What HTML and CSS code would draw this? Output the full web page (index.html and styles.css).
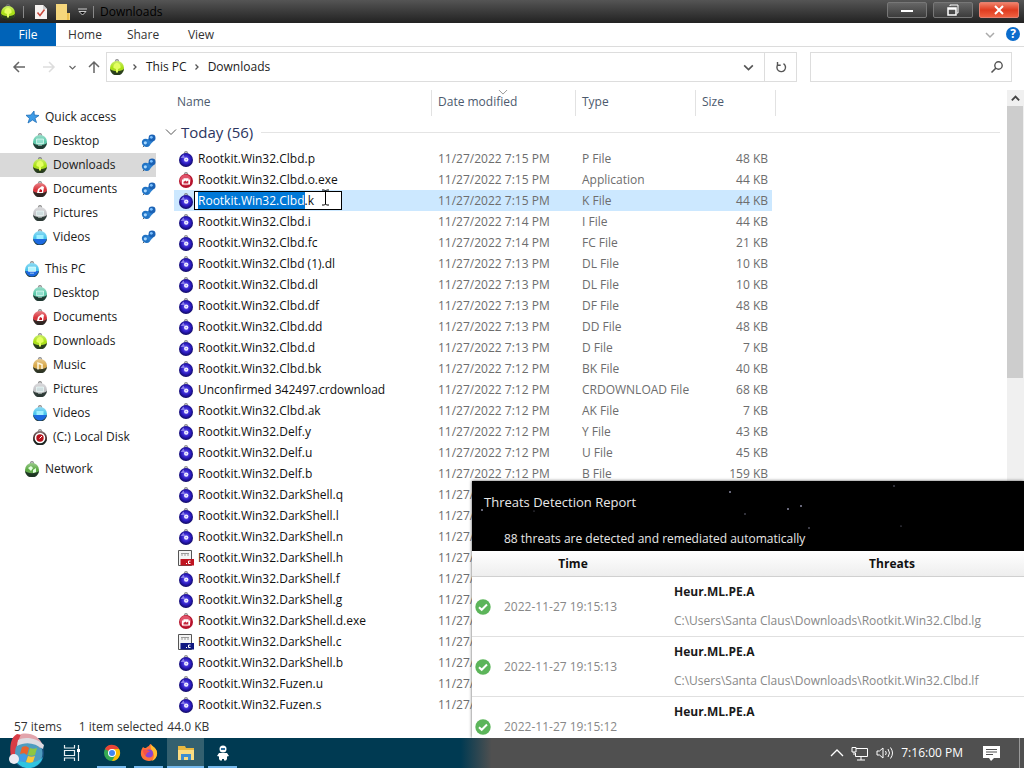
FILE: index.html
```html
<!DOCTYPE html>
<html lang="en">
<head>
<meta charset="UTF-8">
<meta name="viewport" content="width=device-width, initial-scale=1.0">
<title>Downloads</title>
<link rel="stylesheet" href="styles.css">
</head>
<body>

  <!-- Icon sprite -->
  <svg class="sprite" aria-hidden="true">
    <defs>
      <linearGradient id="shade" x1="0" y1="0" x2="0" y2="1">
        <stop offset="0" stop-color="#fff" stop-opacity=".4"/>
        <stop offset=".5" stop-color="#fff" stop-opacity="0"/>
        <stop offset="1" stop-color="#000" stop-opacity=".4"/>
      </linearGradient>
      <radialGradient id="navy" cx=".5" cy=".45" r=".6">
        <stop offset="0" stop-color="#7060ff"/>
        <stop offset=".55" stop-color="#2c1cc0"/>
        <stop offset="1" stop-color="#08044a"/>
      </radialGradient>
    </defs>
    <symbol id="ball" viewBox="0 0 16 16">
      <path d="M6.800 3V.8h2.400V3" fill="none" stroke="#777"/>
      <circle cx="8" cy="9" r="7" fill="currentColor"/>
      <circle cx="8" cy="9" r="7" fill="url(#shade)"/>
      <path d="M1 9.500C3 13 13 13 15 9.500a7 7 0 0 1-14 0z" fill="#10201c" fill-opacity=".8"/>
    </symbol>
    <symbol id="file" viewBox="0 0 16 16">
      <path d="M6.800 3V.8h2.400V3" fill="none" stroke="#777"/>
      <circle cx="8" cy="9" r="7" fill="url(#navy)"/>
      <path d="m2.500 7 3-3.500L7 7z" fill="#9c94f0" fill-opacity=".8"/>
      <circle cx="8.200" cy="8.600" r="2.200" fill="#f0eeff"/>
      <circle cx="8.200" cy="8.600" r=".7" fill="#8a80e8"/>
    </symbol>
    <symbol id="exe" viewBox="0 0 16 16">
      <path d="M6.800 3V.8h2.400V3" fill="none" stroke="#777"/>
      <circle cx="8" cy="9" r="7" fill="#b5132c"/>
      <circle cx="7.500" cy="8" r="5.500" fill="#e0536a"/>
      <path d="M4 7.500h1.500V6.300h5v1.200H12v5H4z" fill="#fff"/>
      <path d="M5.500 9.800 8 8.400v1.400l2.300-1.400v3.200H5.500z" fill="#c4283e"/>
    </symbol>
    <symbol id="doc" viewBox="0 0 16 16">
      <path d="M.5.5h13v15H.5z" fill="#f4f4f4" stroke="#555"/>
      <path d="M3 3.500h8M3 5h2m1 0h2m1 0h2" stroke="#9a9a9a"/>
      <path d="M2.500 9H16v6.500H2.500z" fill="currentColor"/>
      <path d="M8 13.500h1M12.500 11h-2v2.500h2" fill="none" stroke="#fff"/>
    </symbol>
    <symbol id="leaf" viewBox="0 0 16 16"><path d="M8 3.500c3 1 4 3 3.500 5.500L9 10v3.500H7V10L4.500 9C4 6.500 5 4.500 8 3.500z" fill="#e4ff60"/></symbol>
    <symbol id="pane" viewBox="0 0 16 16"><path d="M4.500 6h7v4.500h-7zM6 12.200h4" fill="#dff" fill-opacity=".4" stroke="#effffa" stroke-opacity=".8" stroke-width=".8"/></symbol>
    <symbol id="page" viewBox="0 0 16 16"><path d="M5 12 6 8l4-3 2 1-1 6z" fill="#fff"/><path d="m7 11 1-3 2 1v2z" fill="#c41824"/></symbol>
    <symbol id="drop" viewBox="0 0 16 16"><path d="M4.500 6h7v4h-7z" fill="#9ff0ff"/><path d="M1.500 10h13c-1 4-4 5.500-6.500 5.500S2.500 14 1.500 10z" fill="#1c6ae0"/></symbol>
    <symbol id="note" viewBox="0 0 16 16"><path d="M6 12.500V6l4 1.500v4.500" fill="none" stroke="#fff8e0" stroke-width="1.500"/></symbol>
    <symbol id="disk" viewBox="0 0 16 16"><circle cx="8" cy="9" r="5.300" fill="#fff"/><circle cx="8" cy="9" r="3.700" fill="#b8121c"/><path d="m7.500 9.500 2.500-2.500" stroke="#fff"/></symbol>
    <symbol id="globe" viewBox="0 0 16 16"><path d="m4 7 3-2 2 2-2 3zM9 9l3-2v4l-3 1z" fill="#e4ffe0"/></symbol>
    <symbol id="star" viewBox="0 0 16 16"><path d="m10 2 .3 4 4.700.5-4 2.800 1.500 4.200-4-2.500L4 14l1.500-4.500L2 6.300l4.800-.3z" fill="#3d9be6" stroke="#1d6db8" stroke-width=".8"/></symbol>
    <symbol id="pin" viewBox="0 0 16 16">
      <path d="m2 14 4-4" stroke="#555"/>
      <ellipse cx="5.500" cy="9.500" rx="4.800" ry="4.200" fill="#2173c4" transform="rotate(40 5.500 9.500)"/>
      <path d="m5 8 4-4 4 4-4 4z" fill="#2b7fd0"/>
      <circle cx="11.800" cy="4.200" r="3.700" fill="#1b62b5"/>
      <circle cx="11" cy="3.500" r="1.500" fill="#7cc0ff"/>
      <circle cx="4.600" cy="9.400" r="1.700" fill="#a8d8ff"/>
    </symbol>
    <symbol id="ok" viewBox="0 0 16 16"><circle cx="8" cy="8" r="7.700" fill="#5cb55a"/><path d="m4 8.200 2.700 2.600L12 5.500" fill="none" stroke="#fff" stroke-width="2"/></symbol>
    <symbol id="down" viewBox="0 0 12 12"><path d="m2 4 4 4 4-4" fill="none" stroke="currentColor" stroke-width="1.500"/></symbol>
    <symbol id="thin-down" viewBox="0 0 12 12"><path d="m1 3.500 5 5 5-5" fill="none" stroke="currentColor"/></symbol>
    <symbol id="right" viewBox="0 0 12 12"><path d="m4.500 3.500 2.500 2.500-2.500 2.500" fill="none" stroke="currentColor" stroke-width="1.300"/></symbol>
  </svg>

  <header class="titlebar">
    <svg class="icon green"><use href="#ball"/><use href="#leaf"/></svg>
    <span class="divider"></span>
    <button class="quick" aria-label="Properties">
      <svg width="14" height="16" viewBox="0 0 14 16"><path d="M1 1h8l4 4v10H1z" fill="#f6f2f0"/><path d="M9 1v4h4" fill="#ccc"/><path d="m3.500 8.500 2.500 3 4.500-6" fill="none" stroke="#c8483c" stroke-width="1.500"/></svg>
    </button>
    <button class="quick" aria-label="New folder">
      <svg width="14" height="16" viewBox="0 0 14 16"><path d="M0 0h11v9h3v7H0z" fill="#f5d67c"/><path d="M11 9h2v7h-2z" fill="#e9bd4e"/></svg>
    </button>
    <button class="quick" aria-label="Customize toolbar">
      <svg width="9" height="8" viewBox="0 0 9 8"><path d="M0 1h9M1 3.500h7L4.500 7z" fill="#111" stroke="#ccc"/></svg>
    </button>
    <span class="divider"></span>
    <span class="window-title">Downloads</span>
    <div class="window-buttons">
      <button aria-label="Minimize"><svg width="12" height="11" viewBox="0 0 12 11"><path d="M0 6h12" stroke="#fff" stroke-width="2"/></svg></button>
      <button aria-label="Restore"><svg width="12" height="12" viewBox="0 0 12 12"><path d="M3 2V1h8v8h-1" fill="none" stroke="#fff"/><path d="M1 4h8v7H1zM1 5h8" fill="none" stroke="#fff" stroke-width="1.500"/></svg></button>
      <button class="close" aria-label="Close"><svg width="10" height="10" viewBox="0 0 10 10"><path d="m1 1 8 8M9 1 1 9" stroke="#fff" stroke-width="2"/></svg></button>
    </div>
  </header>

  <nav class="tabs">
    <button class="file-tab">File</button>
    <button>Home</button>
    <button>Share</button>
    <button>View</button>
    <button class="expand" aria-label="Expand the ribbon"><svg width="12" height="12"><use href="#down"/></svg></button>
    <button class="help" aria-label="Help">?</button>
  </nav>

  <div class="address-row">
    <div class="nav-buttons">
      <button aria-label="Back"><svg width="14" height="14" viewBox="0 0 14 14"><path d="M13 7H2m5-5L2 7l5 5" fill="none" stroke="#666" stroke-width="1.500"/></svg></button>
      <button aria-label="Forward" disabled><svg width="14" height="14" viewBox="0 0 14 14"><path d="M1 7h11M7 2l5 5-5 5" fill="none" stroke="#ddd" stroke-width="1.500"/></svg></button>
      <button class="recent" aria-label="Recent locations"><svg width="9" height="9"><use href="#down"/></svg></button>
      <button aria-label="Up"><svg width="14" height="14" viewBox="0 0 14 14"><path d="M7 13V2M2 7l5-5 5 5" fill="none" stroke="#666" stroke-width="1.500"/></svg></button>
    </div>
    <div class="address">
      <svg class="icon green"><use href="#ball"/><use href="#leaf"/></svg>
      <svg class="crumb-arrow"><use href="#right"/></svg>
      <a href="#">This PC</a>
      <svg class="crumb-arrow"><use href="#right"/></svg>
      <a href="#">Downloads</a>
      <button class="history" aria-label="Previous locations"><svg width="13" height="13"><use href="#down"/></svg></button>
      <button class="refresh" aria-label="Refresh"><svg width="12" height="12" viewBox="0 0 12 12"><path d="M8.500 2.700A4.300 4.300 0 1 1 3 3.500M2.500 1v3.200h3.200" fill="none" stroke="#555" stroke-width="1.400"/></svg></button>
    </div>
    <div class="search">
      <input type="text" aria-label="Search Downloads">
      <svg width="14" height="14" viewBox="0 0 14 14"><circle cx="8.500" cy="5.500" r="3.700" fill="none" stroke="#555" stroke-width="1.400"/><path d="m6 8-4.500 4.500" stroke="#555" stroke-width="1.600"/></svg>
    </div>
  </div>

  <main>
    <aside class="sidebar">
      <ul>
        <li class="root"><svg class="icon"><use href="#star"/></svg><a href="#">Quick access</a></li>
        <li><svg class="icon teal"><use href="#ball"/><use href="#pane"/></svg><a href="#">Desktop</a><svg class="pin"><use href="#pin"/></svg></li>
        <li class="current"><svg class="icon green"><use href="#ball"/><use href="#leaf"/></svg><a href="#">Downloads</a><svg class="pin"><use href="#pin"/></svg></li>
        <li><svg class="icon red"><use href="#ball"/><use href="#page"/></svg><a href="#">Documents</a><svg class="pin"><use href="#pin"/></svg></li>
        <li><svg class="icon silver"><use href="#ball"/><use href="#pane"/></svg><a href="#">Pictures</a><svg class="pin"><use href="#pin"/></svg></li>
        <li><svg class="icon sky"><use href="#ball"/><use href="#drop"/></svg><a href="#">Videos</a><svg class="pin"><use href="#pin"/></svg></li>
      </ul>
      <ul>
        <li class="root"><svg class="icon sky"><use href="#ball"/><use href="#drop"/><use href="#pane"/></svg><a href="#">This PC</a></li>
        <li><svg class="icon teal"><use href="#ball"/><use href="#pane"/></svg><a href="#">Desktop</a></li>
        <li><svg class="icon red"><use href="#ball"/><use href="#page"/></svg><a href="#">Documents</a></li>
        <li><svg class="icon green"><use href="#ball"/><use href="#leaf"/></svg><a href="#">Downloads</a></li>
        <li><svg class="icon amber"><use href="#ball"/><use href="#note"/></svg><a href="#">Music</a></li>
        <li><svg class="icon silver"><use href="#ball"/><use href="#pane"/></svg><a href="#">Pictures</a></li>
        <li><svg class="icon sky"><use href="#ball"/><use href="#drop"/></svg><a href="#">Videos</a></li>
        <li><svg class="icon dark"><use href="#ball"/><use href="#disk"/></svg><a href="#">(C:) Local Disk</a></li>
      </ul>
      <ul>
        <li class="root"><svg class="icon forest"><use href="#ball"/><use href="#globe"/></svg><a href="#">Network</a></li>
      </ul>
    </aside>

    <section class="files">
      <table class="file-table">
        <colgroup><col class="col-name"><col class="col-date"><col class="col-type"><col class="col-size"><col></colgroup>
        <thead>
          <tr><th>Name</th><th class="sorted">Date modified<svg class="sort-mark"><use href="#thin-down"/></svg></th><th>Type</th><th>Size</th><td></td></tr>
        </thead>
        <tbody>
          <tr class="group"><th colspan="5"><div><svg width="12" height="12"><use href="#thin-down"/></svg>Today (56)</div></th></tr>
          <tr><td><div><svg class="icon"><use href="#file"/></svg>Rootkit.Win32.Clbd.p</div></td><td>11/27/2022 7:15 PM</td><td>P File</td><td>48 KB</td></tr>
          <tr><td><div><svg class="icon"><use href="#exe"/></svg>Rootkit.Win32.Clbd.o.exe</div></td><td>11/27/2022 7:15 PM</td><td>Application</td><td>44 KB</td></tr>
          <tr class="selected"><td><div><svg class="icon"><use href="#file"/></svg><input id="rename" class="rename" type="text" aria-label="File name" value="Rootkit.Win32.Clbd.k" spellcheck="false"><svg class="ibeam" viewBox="0 0 9 17"><path d="M1 1h2.500l1 1 1-1H8M4.500 2v13M1 16h2.500l1-1 1 1H8" fill="none" stroke="#000"/></svg></div></td><td>11/27/2022 7:15 PM</td><td>K File</td><td>44 KB</td></tr>
          <tr><td><div><svg class="icon"><use href="#file"/></svg>Rootkit.Win32.Clbd.i</div></td><td>11/27/2022 7:14 PM</td><td>I File</td><td>44 KB</td></tr>
          <tr><td><div><svg class="icon"><use href="#file"/></svg>Rootkit.Win32.Clbd.fc</div></td><td>11/27/2022 7:14 PM</td><td>FC File</td><td>21 KB</td></tr>
          <tr><td><div><svg class="icon"><use href="#file"/></svg>Rootkit.Win32.Clbd (1).dl</div></td><td>11/27/2022 7:13 PM</td><td>DL File</td><td>10 KB</td></tr>
          <tr><td><div><svg class="icon"><use href="#file"/></svg>Rootkit.Win32.Clbd.dl</div></td><td>11/27/2022 7:13 PM</td><td>DL File</td><td>10 KB</td></tr>
          <tr><td><div><svg class="icon"><use href="#file"/></svg>Rootkit.Win32.Clbd.df</div></td><td>11/27/2022 7:13 PM</td><td>DF File</td><td>48 KB</td></tr>
          <tr><td><div><svg class="icon"><use href="#file"/></svg>Rootkit.Win32.Clbd.dd</div></td><td>11/27/2022 7:13 PM</td><td>DD File</td><td>48 KB</td></tr>
          <tr><td><div><svg class="icon"><use href="#file"/></svg>Rootkit.Win32.Clbd.d</div></td><td>11/27/2022 7:13 PM</td><td>D File</td><td>7 KB</td></tr>
          <tr><td><div><svg class="icon"><use href="#file"/></svg>Rootkit.Win32.Clbd.bk</div></td><td>11/27/2022 7:12 PM</td><td>BK File</td><td>40 KB</td></tr>
          <tr><td><div><svg class="icon"><use href="#file"/></svg>Unconfirmed 342497.crdownload</div></td><td>11/27/2022 7:12 PM</td><td>CRDOWNLOAD File</td><td>68 KB</td></tr>
          <tr><td><div><svg class="icon"><use href="#file"/></svg>Rootkit.Win32.Clbd.ak</div></td><td>11/27/2022 7:12 PM</td><td>AK File</td><td>7 KB</td></tr>
          <tr><td><div><svg class="icon"><use href="#file"/></svg>Rootkit.Win32.Delf.y</div></td><td>11/27/2022 7:12 PM</td><td>Y File</td><td>43 KB</td></tr>
          <tr><td><div><svg class="icon"><use href="#file"/></svg>Rootkit.Win32.Delf.u</div></td><td>11/27/2022 7:12 PM</td><td>U File</td><td>45 KB</td></tr>
          <tr><td><div><svg class="icon"><use href="#file"/></svg>Rootkit.Win32.Delf.b</div></td><td>11/27/2022 7:12 PM</td><td>B File</td><td>159 KB</td></tr>
          <tr><td><div><svg class="icon"><use href="#file"/></svg>Rootkit.Win32.DarkShell.q</div></td><td>11/27/</td><td></td><td></td></tr>
          <tr><td><div><svg class="icon"><use href="#file"/></svg>Rootkit.Win32.DarkShell.l</div></td><td>11/27/</td><td></td><td></td></tr>
          <tr><td><div><svg class="icon"><use href="#file"/></svg>Rootkit.Win32.DarkShell.n</div></td><td>11/27/</td><td></td><td></td></tr>
          <tr><td><div><svg class="icon doc-red"><use href="#doc"/></svg>Rootkit.Win32.DarkShell.h</div></td><td>11/27/</td><td></td><td></td></tr>
          <tr><td><div><svg class="icon"><use href="#file"/></svg>Rootkit.Win32.DarkShell.f</div></td><td>11/27/</td><td></td><td></td></tr>
          <tr><td><div><svg class="icon"><use href="#file"/></svg>Rootkit.Win32.DarkShell.g</div></td><td>11/27/</td><td></td><td></td></tr>
          <tr><td><div><svg class="icon"><use href="#exe"/></svg>Rootkit.Win32.DarkShell.d.exe</div></td><td>11/27/</td><td></td><td></td></tr>
          <tr><td><div><svg class="icon doc-blue"><use href="#doc"/></svg>Rootkit.Win32.DarkShell.c</div></td><td>11/27/</td><td></td><td></td></tr>
          <tr><td><div><svg class="icon"><use href="#file"/></svg>Rootkit.Win32.DarkShell.b</div></td><td>11/27/</td><td></td><td></td></tr>
          <tr><td><div><svg class="icon"><use href="#file"/></svg>Rootkit.Win32.Fuzen.u</div></td><td>11/27/</td><td></td><td></td></tr>
          <tr><td><div><svg class="icon"><use href="#file"/></svg>Rootkit.Win32.Fuzen.s</div></td><td>11/27/</td><td></td><td></td></tr>
        </tbody>
      </table>
    </section>

    <div class="scrollbar">
      <button aria-label="Scroll up"><svg width="11" height="11" viewBox="0 0 12 12"><path d="m2 8 4-4 4 4" fill="none" stroke="#444" stroke-width="2"/></svg></button>
      <div class="thumb"></div>
    </div>
  </main>

  <footer class="statusbar">
    <span>57 items</span>
    <span>1 item selected</span>
    <span>44.0 KB</span>
  </footer>

  <!-- Antivirus report popup -->
  <section class="report" aria-label="Threats Detection Report">
    <div class="report-head">
      <svg class="stars" viewBox="0 0 552 70"><g fill="#8888a0"><circle cx="258" cy="11" r="1"/><circle cx="10" cy="29" r="1"/><circle cx="62" cy="30" r=".5"/><circle cx="273" cy="33" r=".7"/><circle cx="316" cy="28" r="1"/><circle cx="329" cy="25" r="1"/><circle cx="337" cy="47" r=".8"/><circle cx="422" cy="5" r=".7"/><circle cx="429" cy="45" r=".6"/></g></svg>
      <h2>Threats Detection Report</h2>
      <p>88 threats are detected and remediated automatically</p>
    </div>
    <table class="report-table">
      <thead>
        <tr><th>Time</th><th>Threats</th></tr>
      </thead>
      <tbody>
        <tr><td><div><svg class="icon"><use href="#ok"/></svg>2022-11-27 19:15:13</div></td><td><strong>Heur.ML.PE.A</strong><span>C:\Users\Santa Claus\Downloads\Rootkit.Win32.Clbd.lg</span></td></tr>
        <tr><td><div><svg class="icon"><use href="#ok"/></svg>2022-11-27 19:15:13</div></td><td><strong>Heur.ML.PE.A</strong><span>C:\Users\Santa Claus\Downloads\Rootkit.Win32.Clbd.lf</span></td></tr>
        <tr><td><div><svg class="icon"><use href="#ok"/></svg>2022-11-27 19:15:12</div></td><td><strong>Heur.ML.PE.A</strong></td></tr>
      </tbody>
    </table>
  </section>

  <div class="taskbar">
    <button class="start" aria-label="Start">
      <svg viewBox="0 0 38 36">
        <circle cx="20" cy="20" r="16" fill="#174f7d"/>
        <circle cx="20" cy="20" r="14.500" fill="#4e9cc0"/>
        <path d="M6 24a15 15 0 0 0 29 0c-6 7-20 8-29 0z" fill="#2fc4e0"/>
        <path d="M14 14c3-1 5-1 7 1l-2 7c-2-2-4-2-7-1z" fill="#e8622c"/>
        <path d="M22 15c2 1 5 1 7 0l-2 7c-2 1-5 1-7 0z" fill="#8fc642"/>
        <path d="M12 22c3-1 5-1 7 1l-2 6c-2-1-4-1-6 0z" fill="#3f9be8"/>
        <path d="M20 23c2 1 5 1 7 0l-2 6c-2 1-5 1-7 0z" fill="#fcc737"/>
        <path d="M3 24C1 13 3 4 9 1l5 1-4 9c-3 3-3 8-3 13z" fill="#d83c46"/>
        <path d="M13 1c9-2 19 2 22 12l-3 2C27 8 18 6 9 11z" fill="#e2a4ac"/>
        <path d="M10 7c7-4 19-2 26 5l-1 4c-8-6-17-8-26-3z" fill="#dddbe2"/>
        <circle cx="6" cy="26" r="5" fill="#eceaf2"/>
      </svg>
    </button>
    <button class="task-view" aria-label="Task View">
      <svg width="18" height="18" viewBox="0 0 18 18"><path d="M1.500 1v3h10V1M1.500 17v-3h10v3M1.500 6.500h10v5h-10zM15.500 1v16" fill="none" stroke="#e8f0f2" stroke-width="1.200"/><path d="M14 5h3v3h-3z" fill="#fff"/></svg>
    </button>
    <button class="app" aria-label="Chrome">
      <svg width="18" height="18" viewBox="0 0 18 18"><circle cx="9" cy="9" r="8" fill="#34a853"/><path d="M9 9 2 5a8 8 0 0 1 14.900 2.500z" fill="#ea4335"/><path d="M9 5h7a8 8 0 0 1-7 12l3.500-6z" fill="#fbbc05"/><circle cx="9" cy="9" r="4" fill="#fff"/><circle cx="9" cy="9" r="3" fill="#4285f4"/></svg>
    </button>
    <button class="app" aria-label="Firefox">
      <svg width="18" height="18" viewBox="0 0 18 18"><path d="M3 3c1 1 2 1 3 1 1-1 2-2 3-2 0-1 1-2 2-2 0 2 5 3 6 8 1 5-3 9-8 9s-9-4-8-9c0-2 1-3 2-5z" fill="#ff7139"/><path d="M11 0c0 2 5 3 6 8 .500 4-2 8-5 9 3-4 2-8 0-10-1-2-2-4-1-7z" fill="#ffbd2f"/><circle cx="9" cy="9.500" r="4" fill="#8a46d0"/><path d="M3 6c3-1 5 0 7 2-3 0-3 1-4 3-1 1-3-2-3-5z" fill="#f5504b"/></svg>
    </button>
    <button class="app active" aria-label="File Explorer">
      <svg width="18" height="16" viewBox="0 0 18 16"><path d="M1 1h7l1 2h8v12H1z" fill="#e9b840"/><path d="M1 5h16v10H1z" fill="#fbdc82"/><path d="M4 9h10v6h-3v-3H7v3H4z" fill="#3f8ed0"/></svg>
    </button>
    <button class="app" aria-label="Sandbox app">
      <svg width="14" height="16" viewBox="0 0 14 16"><circle cx="7" cy="4" r="3.500" fill="#fff"/><path d="M5 3h4v2H5z" fill="#2a6c9c"/><path d="M3 8h8l2 3-2 .5V14l-1 1.500H8V14H6v1.500H4L3 14v-2.500L1 11z" fill="#fff"/></svg>
    </button>
    <div class="tray">
      <button aria-label="Show hidden icons"><svg width="14" height="14" viewBox="0 0 14 14"><path d="m1 10 6-6 6 6" fill="none" stroke="#fff" stroke-width="1.300"/></svg></button>
      <button aria-label="Network"><svg width="18" height="15" viewBox="0 0 18 15"><path d="M5 2.500h11.500v8H4.500V7M10 11v3M6 14h8M1 1.500h4V6H1zM3 6v3" fill="none" stroke="#fff"/></svg></button>
      <button aria-label="Volume"><svg width="18" height="14" viewBox="0 0 18 14"><path d="M1 5h2.500L7 2v10L3.500 9H1zM9.500 5q1.500 2 0 4M12 3q3 4 0 8M14.500 1.500q4 5.500 0 11" fill="none" stroke="#fff"/></svg></button>
      <time>7:16:00 PM</time>
      <button class="notify" aria-label="Notifications"><svg width="17" height="17" viewBox="0 0 17 17"><path d="M0 1h17v12h-6l-3 3-2-3H0z" fill="#fff"/><path d="M3 4.500h11M3 7h11M3 9.500h7" stroke="#505050"/></svg></button>
      <button class="show-desktop" aria-label="Show desktop"></button>
    </div>
  </div>

<script>
  // Select the base name only, the extension stays unselected
  const rename = document.getElementById('rename');
  rename.focus();
  rename.setSelectionRange(0, rename.value.lastIndexOf('.'));
</script>

</body>
</html>
```
FILE: styles.css
```css
* {
  box-sizing: border-box;
}

body {
  margin: 0;
  height: 100vh;
  display: flex;
  flex-direction: column;
  position: relative;
  overflow: hidden;
  background: #fff;
  color: #1a1a1a;
  font-family: "Open Sans", "Noto Sans", sans-serif;
  font-size: 12px;
  line-height: 16px;
}

button {
  font: inherit;
  color: inherit;
  background: none;
  border: none;
  padding: 0;
  display: flex;
  align-items: center;
  justify-content: center;
}

a {
  color: inherit;
  text-decoration: none;
}

ul {
  list-style: none;
  margin: 0;
  padding: 0;
}

svg {
  flex: none;
  display: block;
}

.sprite {
  position: absolute;
  width: 0;
  height: 0;
}

.icon {
  width: 16px;
  height: 16px;
}

/* Icon colours */
.green { color: #a8e010; }
.teal { color: #58c8a8; }
.red { color: #d83038; }
.silver { color: #c4c4c8; }
.sky { color: #48c4ec; }
.amber { color: #d8a848; }
.dark { color: #402424; }
.forest { color: #58a840; }
.doc-red { color: #c01420; }
.doc-blue { color: #101880; }

/* Title bar */
.titlebar {
  flex: none;
  display: flex;
  align-items: center;
  height: 23px;
  background: linear-gradient(#555 0, #454545 30%, #222 100%);
}

.titlebar > .icon {
  margin-right: 5px;
}

.divider {
  width: 2px;
  height: 12px;
  margin: 0 5px 0 2px;
  border-left: 1px solid #888;
}

.quick {
  margin: 0 4px;
}

.window-title {
  color: #000;
}

.window-buttons {
  display: flex;
  gap: 6px;
  margin: 0 5px 3px auto;
}

.window-buttons button {
  width: 40px;
  height: 16px;
  border: 1px solid #777;
  border-radius: 2px;
  background: linear-gradient(#666, #3c3c3c);
}

.window-buttons .close {
  border-color: #e88070;
  background: linear-gradient(#f08068, #e03c20 50%, #f06040);
}

/* Ribbon tabs */
.tabs {
  flex: none;
  display: flex;
  height: 24px;
  border-bottom: 1px solid #dcdcdc;
  color: #333;
}

.tabs button {
  width: 58px;
  height: 23px;
}

.tabs .file-tab {
  width: 56px;
  background: #0063b8;
  color: #fff;
}

.tabs .expand {
  width: 12px;
  margin-left: auto;
  margin-right: 10px;
  color: #aaa;
}

.tabs .help {
  width: 14px;
  height: 14px;
  margin: 4px 4px 0 0;
  border-radius: 50%;
  background: #0a6ccc;
  color: #fff;
  font-weight: bold;
}

/* Address bar */
.address-row {
  flex: none;
  display: flex;
  align-items: flex-start;
  height: 43px;
  padding: 5px 12px 0;
  color: #1a1a1a;
}

.nav-buttons {
  display: flex;
  gap: 12px;
  align-items: center;
  width: 94px;
  height: 30px;
}

.nav-buttons button {
  width: 14px;
}

.nav-buttons .recent {
  width: 9px;
  color: #666;
}

.nav-buttons .recent + button {
  margin-left: -2px;
}

.nav-buttons button:nth-child(2) {
  margin-left: 4px;
}

.address {
  flex: 1;
  display: flex;
  align-items: center;
  height: 30px;
  padding-left: 2px;
  border: 1px solid #ddd;
}

.crumb-arrow {
  width: 12px;
  height: 12px;
  margin: 0 5px 0 4px;
  color: #555;
}

.history {
  margin-left: auto;
  width: 32px;
  height: 28px;
  color: #555;
}

.refresh {
  width: 32px;
  height: 28px;
  border-left: 1px solid #ddd;
}

.search {
  display: flex;
  align-items: center;
  width: 202px;
  height: 30px;
  margin-left: 13px;
  padding-right: 7px;
  border: 1px solid #ddd;
}

.search input {
  flex: 1;
  min-width: 0;
  border: none;
  outline: none;
  font: inherit;
}

/* Main area */
main {
  flex: 1;
  display: flex;
  min-height: 0;
}

.sidebar {
  flex: none;
  width: 160px;
  padding-top: 15px;
}

.sidebar ul {
  margin-bottom: 8px;
}

.sidebar li {
  display: flex;
  align-items: center;
  gap: 5px;
  height: 24px;
  margin-right: 4px;
  padding-left: 32px;
}

.sidebar .root {
  padding-left: 24px;
}

.sidebar .current {
  background: #d9d9d9;
}

.pin {
  width: 15px;
  height: 15px;
  margin-left: auto;
}

.files {
  flex: 1;
  min-width: 0;
  overflow: hidden;
}

.file-table {
  width: 100%;
  table-layout: fixed;
  border-collapse: separate;
  border-spacing: 0;
}

.col-name { width: 272px; }
.col-date { width: 144px; }
.col-type { width: 120px; }
.col-size { width: 80px; }

.file-table thead th {
  height: 26px;
  padding: 0 0 2px 6px;
  border-right: 1px solid #e2e2e2;
  color: #4c5a6e;
  font-weight: normal;
  text-align: left;
}

.file-table thead th:first-child {
  padding-left: 17px;
}

.sorted {
  position: relative;
}

.sort-mark {
  position: absolute;
  top: -3px;
  left: 46%;
  width: 10px;
  height: 10px;
  color: #888;
}

.group th {
  height: 32px;
  padding: 0 7px 0 5px;
  font-weight: normal;
}

.group div {
  display: flex;
  align-items: center;
  gap: 4px;
  color: #2c3560;
  font-size: 15px;
}

.group svg {
  color: #555;
}

.group div::after {
  content: "";
  flex: 1;
  height: 1px;
  margin-left: 4px;
  background: #e4e4e4;
}

.file-table tbody td {
  height: 21px;
  padding: 0 0 0 6px;
  color: #6d6d6d;
  background-clip: padding-box;
  white-space: nowrap;
}

.file-table tbody td:first-child {
  padding-left: 4px;
  border-left: 14px solid transparent;
  color: #111;
}

.file-table tbody td:nth-child(4) {
  padding-right: 4px;
  border-right: 4px solid transparent;
  text-align: right;
}

.file-table td div {
  position: relative;
  display: flex;
  align-items: center;
  gap: 4px;
}

.file-table .selected td {
  background-color: #cce8ff;
}

.file-table .selected div {
  gap: 0;
}

.rename {
  width: 148px;
  height: 19px;
  padding: 0 3px;
  border: 1px solid #000;
  outline: none;
  font: inherit;
  color: #111;
}

.rename::selection {
  background: #0078d7;
  color: #fff;
}

.ibeam {
  position: absolute;
  top: -2px;
  left: 143px;
  width: 9px;
  height: 17px;
}

.scrollbar {
  flex: none;
  width: 17px;
  background: #f0f0f0;
}

.scrollbar button {
  width: 17px;
  height: 16px;
}

.scrollbar .thumb {
  height: 272px;
  margin-right: 1px;
  background: #cdcdcd;
}

/* Status bar */
.statusbar {
  flex: none;
  display: flex;
  height: 22px;
  padding: 3px 14px;
  color: #333;
}

.statusbar span:nth-child(2) {
  margin: 0 4px 0 17px;
}

/* Report popup */
.report {
  position: absolute;
  right: 0;
  bottom: 30px;
  width: 552px;
  height: 257px;
  overflow: hidden;
  background: #fff;
  box-shadow: 0 0 3px #555;
}

.report-head {
  position: relative;
  height: 70px;
  padding: 12px 12px 0;
  background: #000;
  color: #e8e8e8;
  line-height: 18px;
}

.report-head h2 {
  margin: 0;
  font-size: 13px;
  font-weight: normal;
}

.report-head p {
  margin: 19px 0 0 20px;
}

.stars {
  position: absolute;
  top: 0;
  left: 0;
  width: 100%;
  height: 70px;
}

.report-table {
  width: 638px;
  table-layout: fixed;
  border-collapse: separate;
  border-spacing: 0;
}

.report-table th {
  height: 26px;
  padding: 0;
  border-bottom: 1px solid #d0d0d0;
  background: linear-gradient(#fff, #eee);
  color: #111;
}

.report-table th:first-child {
  width: 202px;
}

.report-table td {
  height: 60px;
  padding: 0;
  border-bottom: 1px solid #e0e0e0;
  color: #888;
  vertical-align: top;
}

.report-table div {
  display: flex;
  align-items: center;
  gap: 13px;
  height: 59px;
  padding-left: 3px;
}

.report-table strong,
.report-table span {
  display: block;
  line-height: 29px;
}

.report-table strong {
  color: #1a1a1a;
}

/* Taskbar */
.taskbar {
  flex: none;
  display: flex;
  position: relative;
  height: 30px;
  background: linear-gradient(90deg, #003a52 0, #003a52 45%, #505050 48%, #505050 100%);
  color: #fff;
}

.start {
  position: relative;
  width: 51px;
}

.start svg {
  position: absolute;
  left: 8px;
  bottom: -1px;
  width: 38px;
  height: 36px;
}

.task-view {
  width: 42px;
}

.app {
  width: 37px;
  height: 30px;
  position: relative;
}

.app::after {
  content: "";
  position: absolute;
  left: 4px;
  right: 4px;
  bottom: 0;
  height: 2px;
  background: #76b9ed;
}

.app.active {
  background: #33606f;
}

.app.active::after {
  left: 0;
  right: 0;
}

.tray {
  display: flex;
  align-items: center;
  gap: 7px;
  margin-left: auto;
}

.notify {
  margin: 0 12px 0 13px;
}

.show-desktop {
  width: 5px;
  height: 30px;
  border-left: 1px solid #999;
}
```
